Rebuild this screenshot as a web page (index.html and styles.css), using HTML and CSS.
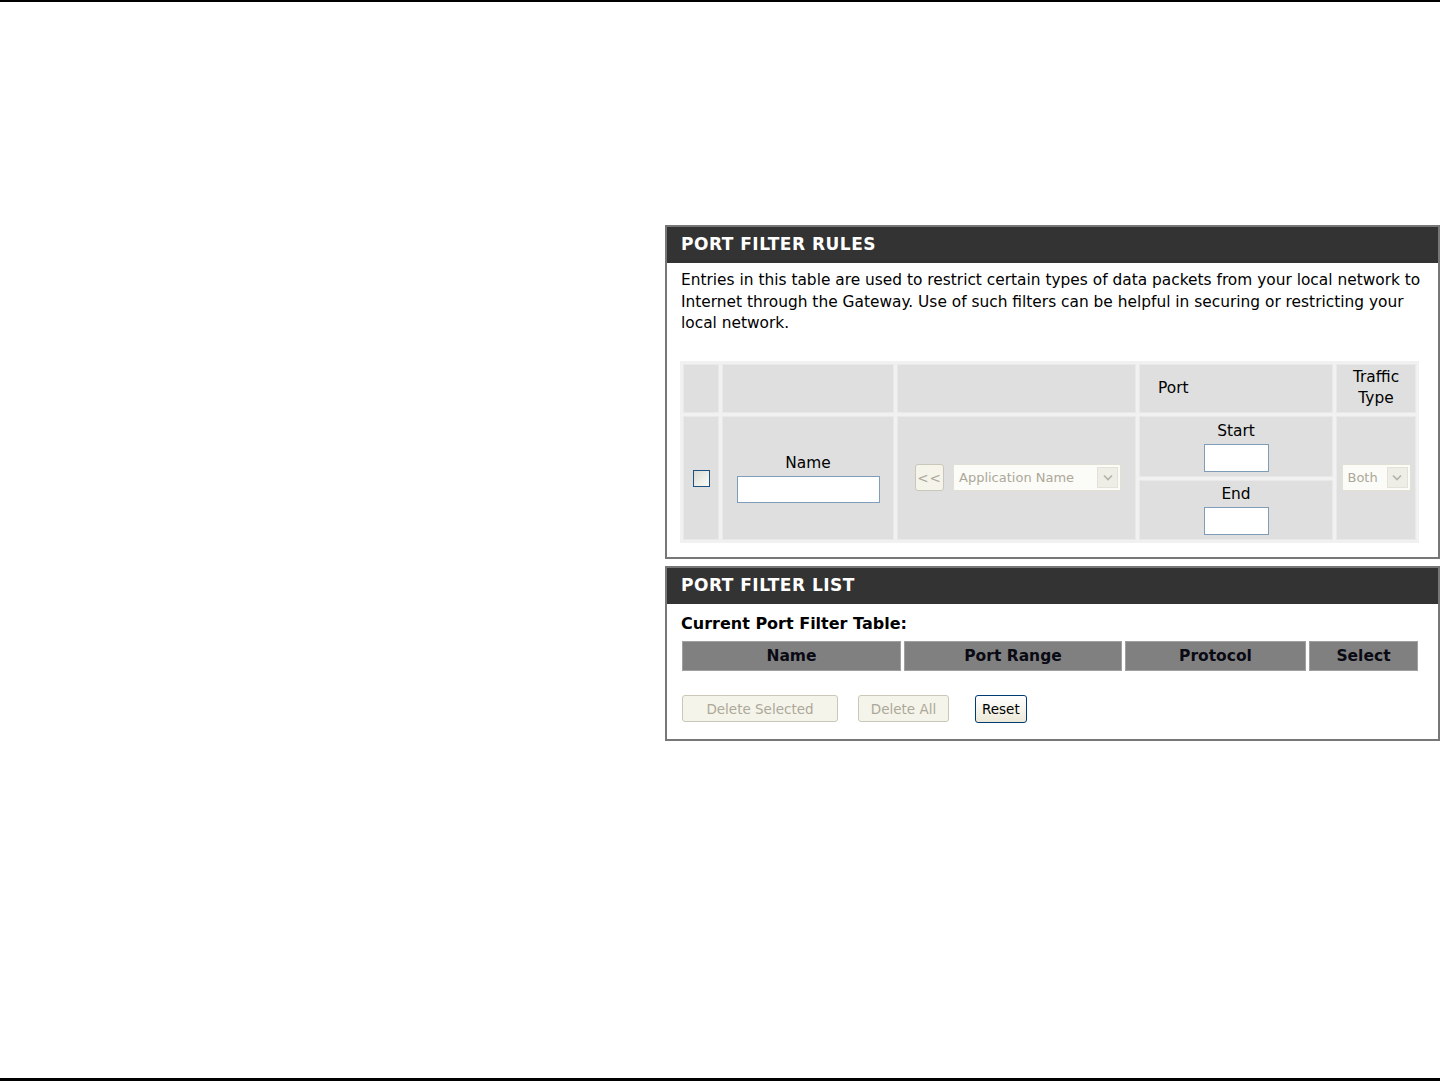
FILE: index.html
```html
<!DOCTYPE html>
<html lang="en">
<head>
    <meta charset="UTF-8">
    <title>Port Filter</title>
    <link rel="stylesheet" href="styles.css">
</head>
<body>
    <div class="page">
        <div class="main">
            <div class="box">
                <h2>PORT FILTER RULES</h2>
                <div class="box-body">
                    <p class="intro">Entries in this table are used to restrict certain types of data packets from your local network to Internet through the Gateway. Use of such filters can be helpful in securing or restricting your local network.</p>

                    <table class="rules">
                        <colgroup>
                            <col class="w-check">
                            <col class="w-name">
                            <col class="w-app">
                            <col class="w-port">
                            <col class="w-type">
                        </colgroup>
                        <tr class="rules-head">
                            <td></td>
                            <td></td>
                            <td></td>
                            <td class="port-label">Port</td>
                            <td class="center">Traffic<br>Type</td>
                        </tr>
                        <tr class="rules-start">
                            <td rowspan="2" class="center"><input type="checkbox" class="check"></td>
                            <td rowspan="2" class="center">
                                <div class="field-label">Name</div>
                                <input type="text" class="text-in name-in">
                            </td>
                            <td rowspan="2" class="center">
                                <div class="app-pick">
                                    <button class="btn btn-off btn-arrow" disabled>&lt;&lt;</button>
                                    <div class="fake-select app-select">
                                        <span class="sel-text">Application Name</span>
                                        <span class="sel-arrow">
                                            <svg width="10" height="7" viewBox="0 0 10 7"><path d="M1 1.5 L5 5.5 L9 1.5" fill="none" stroke="#b4b2a8" stroke-width="1.6"/></svg>
                                        </span>
                                    </div>
                                </div>
                            </td>
                            <td class="center port-cell">
                                <div class="field-label">Start</div>
                                <input type="text" class="text-in port-in">
                            </td>
                            <td rowspan="2" class="center">
                                <div class="fake-select type-select">
                                    <span class="sel-text">Both</span>
                                    <span class="sel-arrow">
                                        <svg width="10" height="7" viewBox="0 0 10 7"><path d="M1 1.5 L5 5.5 L9 1.5" fill="none" stroke="#b4b2a8" stroke-width="1.6"/></svg>
                                    </span>
                                </div>
                            </td>
                        </tr>
                        <tr class="rules-end">
                            <td class="center port-cell">
                                <div class="field-label">End</div>
                                <input type="text" class="text-in port-in">
                            </td>
                        </tr>
                    </table>
                </div>
            </div>

            <div class="box">
                <h2>PORT FILTER LIST</h2>
                <div class="box-body list-body">
                    <div class="list-title">Current Port Filter Table:</div>
                    <table class="filters">
                        <colgroup>
                            <col class="w-fname">
                            <col class="w-frange">
                            <col class="w-fproto">
                            <col class="w-fsel">
                        </colgroup>
                        <tr>
                            <th>Name</th>
                            <th>Port Range</th>
                            <th>Protocol</th>
                            <th>Select</th>
                        </tr>
                    </table>
                    <div class="actions">
                        <button class="btn btn-off del-sel" disabled>Delete Selected</button>
                        <button class="btn btn-off del-all" disabled>Delete All</button>
                        <button class="btn btn-on">Reset</button>
                    </div>
                </div>
            </div>
        </div>
    </div>
</body>
</html>
```

FILE: styles.css
```css
* {
    box-sizing: border-box;
    margin: 0;
    padding: 0;
}

body {
    font-family: "DejaVu Sans", sans-serif;
    font-size: 15.4px;
    color: #000;
    background: #fff;
}

.page {
    width: 1440px;
    height: 1081px;
    border-top: 2px solid #000;
    border-bottom: 3px solid #000;
    padding: 223px 0 0 665px;
}

.main {
    width: 775px;
}

.box {
    border: 2px solid #777;
    margin-bottom: 7px;
}

.box h2 {
    background: #333;
    color: #fff;
    font-size: 17px;
    font-weight: bold;
    letter-spacing: 0.5px;
    height: 36px;
    line-height: 34px;
    padding-left: 14px;
}

.box-body {
    padding: 7px 14px 14px 14px;
}

.intro {
    line-height: 21.5px;
    margin-bottom: 26px;
}

/* rules table */
.rules {
    border-collapse: separate;
    border-spacing: 3px;
    table-layout: fixed;
    width: 739px;
    margin-left: -1px;
    background: #f1f1f1;
}

.w-check { width: 36px; }
.w-name { width: 172px; }
.w-app { width: 239px; }
.w-port { width: 194px; }
.w-type { width: 80px; }

.rules td {
    background: #dfdfdf;
    border: 1px solid #e9e9e9;
    vertical-align: middle;
    line-height: 21px;
}

.rules-head td {
    height: 49px;
}

.port-label {
    padding-left: 18px;
}

.center {
    text-align: center;
}

.rules-start .port-cell {
    height: 61px;
}

.rules-end .port-cell {
    height: 60px;
}

.field-label {
    line-height: 20px;
    margin-bottom: 3px;
}

.check {
    appearance: none;
    -webkit-appearance: none;
    display: block;
    margin: 2px auto 0 auto;
    width: 17px;
    height: 17px;
    border: 1px solid #1c5180;
    background: linear-gradient(135deg, #dcdcd5 0%, #fbfbf9 100%);
}

.text-in {
    display: block;
    margin: 0 auto;
    border: 1px solid #7f9db9;
    background: #fff;
    font-family: inherit;
}

.name-in {
    width: 143px;
    height: 27px;
}

.port-in {
    width: 65px;
    height: 28px;
}

.app-pick {
    display: flex;
    gap: 9px;
    justify-content: flex-start;
    padding-left: 17px;
}

.btn {
    font-family: inherit;
    font-size: 13.5px;
    height: 27px;
    border-radius: 3px;
    padding: 0 10px;
}

.btn-off {
    background: #f5f4ea;
    border: 1px solid #cbc7b8;
    color: #aca899;
}

.btn-arrow {
    width: 29px;
    padding: 0;
    letter-spacing: 1px;
}

.btn-on {
    background: linear-gradient(#ffffff, #ece9d8);
    border: 1px solid #003c74;
    color: #000;
    height: 28px;
    border-radius: 3px;
    padding: 0 6px;
    margin-left: 6px;
}

.fake-select {
    display: flex;
    align-items: center;
    height: 27px;
    border: 1px solid #e2e0d4;
    background: #fbfbf7;
    padding: 2px;
    color: #aca899;
    font-size: 13px;
}

.sel-text {
    flex: 1;
    text-align: left;
    padding-left: 3px;
}

.sel-arrow {
    width: 21px;
    height: 21px;
    background: #efeee6;
    border: 1px solid #e4e2d8;
    display: flex;
    align-items: center;
    justify-content: center;
}

.app-select {
    width: 168px;
}

.type-select {
    width: 69px;
    margin: 0 auto;
}

/* list table */
.list-body {
    padding: 8px 14px 16px 14px;
}

.list-title {
    font-weight: bold;
    font-size: 16px;
    line-height: 24px;
    margin-bottom: 5px;
}

.filters {
    border-collapse: separate;
    border-spacing: 3px 0;
    table-layout: fixed;
    width: 742px;
    margin-left: -2px;
}

.w-fname { width: 219px; }
.w-frange { width: 218px; }
.w-fproto { width: 181px; }
.w-fsel { width: 109px; }

.filters th {
    background: #808080;
    border: 1px solid #a0a0a0;
    height: 30px;
    font-size: 15.5px;
    font-weight: bold;
    color: #0a0a14;
}

.actions {
    display: flex;
    align-items: center;
    gap: 20px;
    margin-top: 24px;
    padding-left: 1px;
}

.del-sel {
    width: 156px;
}

.del-all {
    width: 91px;
}
```
